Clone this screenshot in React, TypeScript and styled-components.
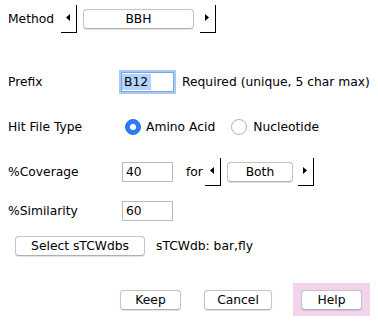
import React from 'react';
import styled, { createGlobalStyle } from 'styled-components';

const GlobalStyle = createGlobalStyle`
  body {
    margin: 0;
    background: #ffffff;
    font-family: "DejaVu Sans", "Liberation Sans", sans-serif;
    font-size: 12.3px;
    color: #000;
  }
`;

const Panel = styled.div`
  width: 378px;
  height: 323px;
  box-sizing: border-box;
  padding: 4px 8px 0 8px;
  display: flex;
  flex-direction: column;
`;

interface RowProps {
  gap?: number;
  height?: number;
}

const Row = styled.div<RowProps>`
  display: flex;
  align-items: center;
  height: ${({ height }) => height ?? 20}px;
  margin-top: ${({ gap }) => gap ?? 0}px;
`;

const Label = styled.div<{ width?: number }>`
  width: ${({ width }) => width ?? 113}px;
  flex-shrink: 0;
  white-space: nowrap;
`;

const Text = styled.span<{ left?: number }>`
  margin-left: ${({ left }) => left ?? 0}px;
  white-space: nowrap;
`;

const ArrowBox = styled.div<{ left?: number }>`
  width: 16px;
  height: 28px;
  box-sizing: border-box;
  border-right: 1px solid #000;
  border-bottom: 1px solid #000;
  margin-left: ${({ left }) => left ?? 0}px;
  display: flex;
  align-items: center;
  justify-content: flex-end;
  padding-right: 6px;
  padding-bottom: 3px;
  flex-shrink: 0;
`;

const Arrow = ({ dir }: { dir: 'left' | 'right' }) => (
  <svg width="4" height="7" viewBox="0 0 4 7">
    {dir === 'left' ? (
      <polygon points="4,0 4,7 0,3.5" fill="#000" />
    ) : (
      <polygon points="0,0 0,7 4,3.5" fill="#000" />
    )}
  </svg>
);

const Button = styled.div<{ width: number; left?: number }>`
  width: ${({ width }) => width}px;
  height: 20px;
  box-sizing: border-box;
  margin-left: ${({ left }) => left ?? 0}px;
  border: 1px solid #c4c4c4;
  border-bottom-color: #b0b0b0;
  border-radius: 4px;
  background: #fff;
  box-shadow: 0 0.5px 1px rgba(0, 0, 0, 0.12);
  display: flex;
  align-items: center;
  justify-content: center;
  flex-shrink: 0;
`;

const Field = styled.div<{ width: number; focused?: boolean }>`
  width: ${({ width }) => width}px;
  height: 20px;
  box-sizing: border-box;
  border: 1px solid ${({ focused }) => (focused ? '#7aa7e6' : '#b9b9b9')};
  box-shadow: ${({ focused }) => (focused ? '0 0 0 2px #a9c8f3' : 'none')};
  background: #fff;
  display: flex;
  align-items: center;
  padding-left: ${({ focused }) => (focused ? 0 : 3)}px;
  flex-shrink: 0;
`;

const Selected = styled.span`
  background: #b3d4fc;
  height: 16px;
  display: flex;
  align-items: center;
  padding: 0 3px 0 2px;
`;

const Radio = styled.span<{ checked?: boolean; left?: number }>`
  width: 16px;
  height: 16px;
  box-sizing: border-box;
  border-radius: 50%;
  margin-left: ${({ left }) => left ?? 0}px;
  background: ${({ checked }) => (checked ? '#2f7bf5' : '#fff')};
  border: 1px solid ${({ checked }) => (checked ? '#2a70e0' : '#b3b3b3')};
  display: flex;
  align-items: center;
  justify-content: center;
  flex-shrink: 0;
  &::after {
    content: '';
    display: ${({ checked }) => (checked ? 'block' : 'none')};
    width: 6px;
    height: 6px;
    border-radius: 50%;
    background: #fff;
  }
`;

const Footer = styled(Row)`
  justify-content: flex-end;
`;

const HelpHalo = styled.div`
  margin-left: 21px;
  height: 33px;
  padding: 0 8px;
  background: #f4d4ec;
  display: flex;
  align-items: center;
`;

export default function App(): JSX.Element {
  return (
    <>
      <GlobalStyle />
      <Panel>
        <Row height={28} gap={1}>
          <Label width={53}>Method</Label>
          <ArrowBox>
            <Arrow dir="left" />
          </ArrowBox>
          <Button width={111} left={6}>
            BBH
          </Button>
          <ArrowBox left={6}>
            <Arrow dir="right" />
          </ArrowBox>
        </Row>

        <Row gap={39}>
          <Label>Prefix</Label>
          <Field width={53} focused>
            <Selected>B12</Selected>
          </Field>
          <Text left={8}>Required (unique, 5 char max)</Text>
        </Row>

        <Row gap={25}>
          <Label>Hit File Type</Label>
          <Radio checked left={4} />
          <Text left={5}>Amino Acid</Text>
          <Radio left={16} />
          <Text left={6}>Nucleotide</Text>
        </Row>

        <Row height={28} gap={21}>
          <Label width={114}>%Coverage</Label>
          <Field width={51}>40</Field>
          <Text left={13}>for</Text>
          <ArrowBox left={2}>
            <Arrow dir="left" />
          </ArrowBox>
          <Button width={66} left={6}>
            Both
          </Button>
          <ArrowBox left={5}>
            <Arrow dir="right" />
          </ArrowBox>
        </Row>

        <Row gap={15}>
          <Label width={114}>%Similarity</Label>
          <Field width={51}>60</Field>
        </Row>

        <Row gap={15}>
          <Button width={130} left={7}>
            Select sTCWdbs
          </Button>
          <Text left={11}>sTCWdb: bar,fly</Text>
        </Row>

        <Footer height={33} gap={27}>
          <Button width={61}>Keep</Button>
          <Button width={68} left={23}>
            Cancel
          </Button>
          <HelpHalo>
            <Button width={61}>Help</Button>
          </HelpHalo>
        </Footer>
      </Panel>
    </>
  );
}
